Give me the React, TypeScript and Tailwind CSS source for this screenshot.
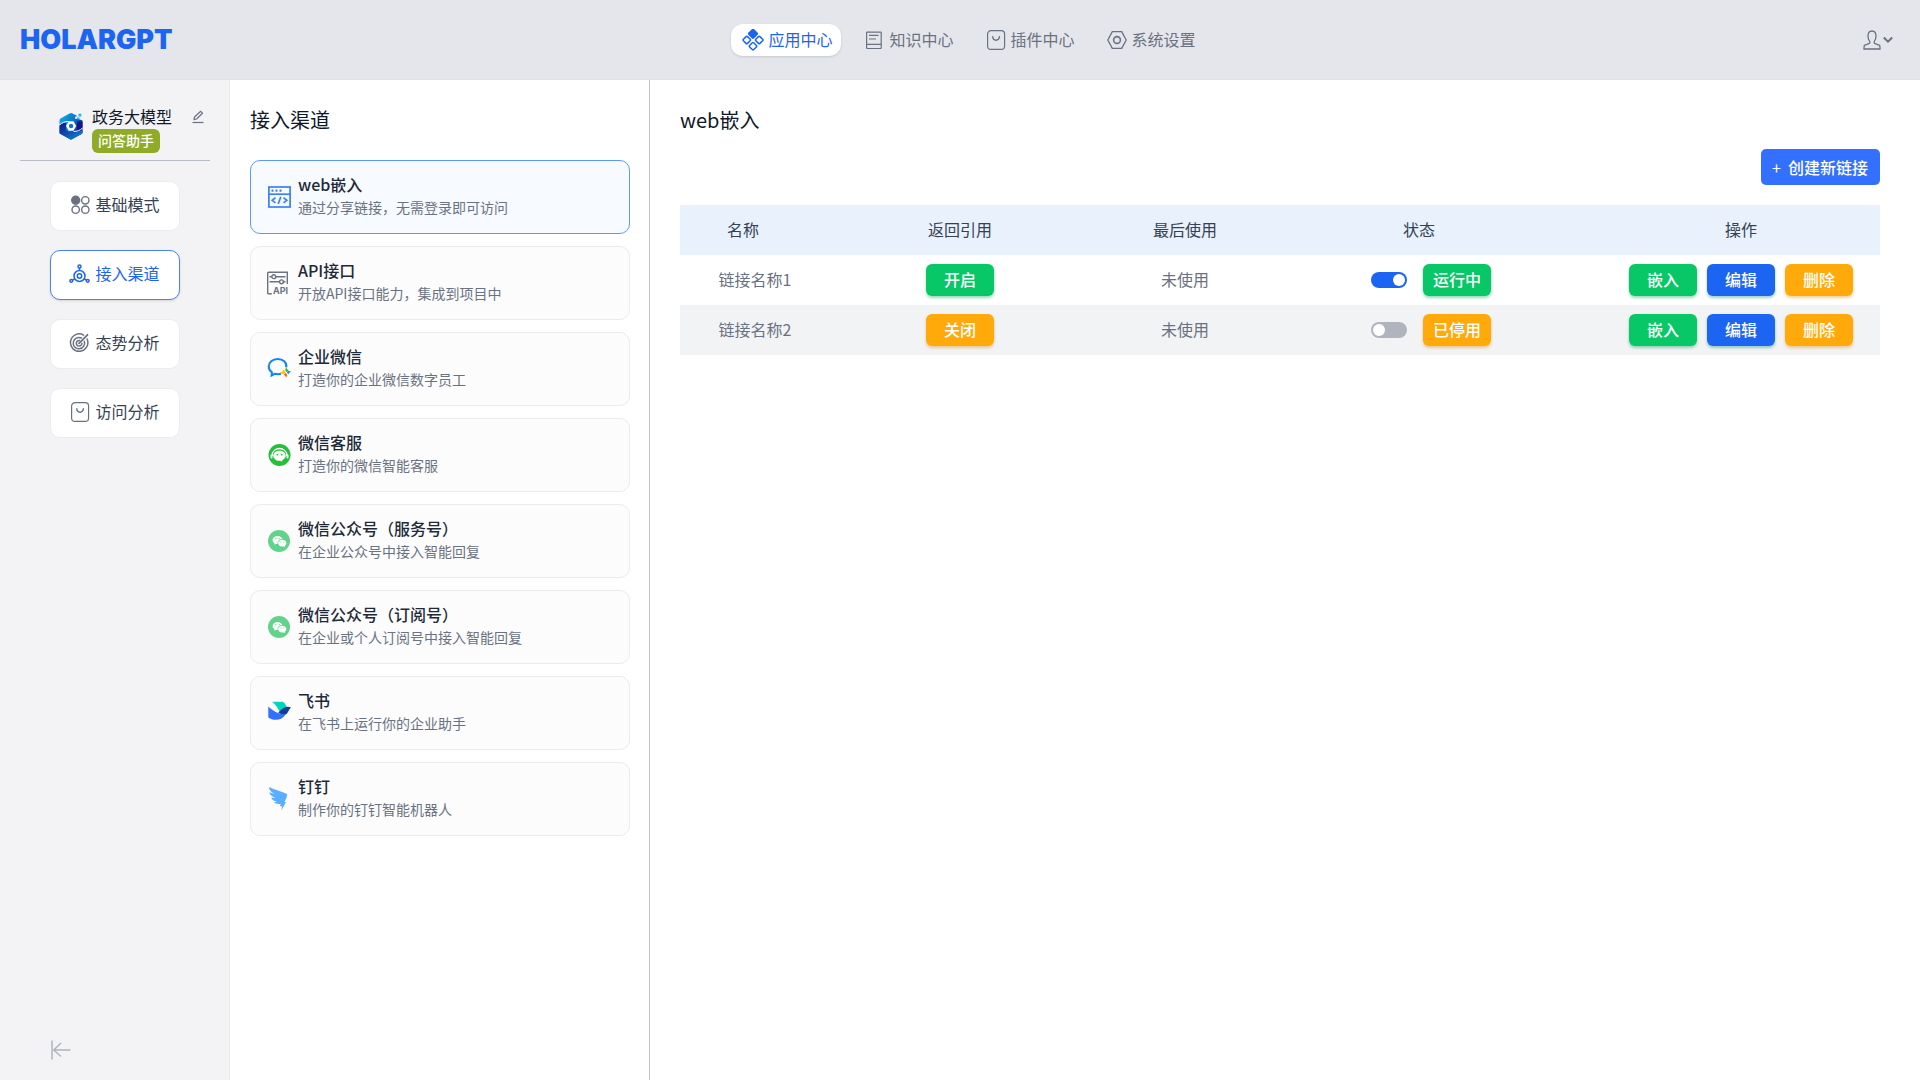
import { useState } from "react";
import type { ReactNode } from "react";
import { RiWechatFill } from "react-icons/ri";

type LinkItem = {
	id: number;
	name: string;
	quote: boolean;
	lastUsed: string;
	running: boolean;
};

const AppsIcon = () => (
	<svg width="22" height="22" viewBox="0 0 22 22" fill="none" stroke="currentColor" strokeWidth="1.5">
		<rect x="7.700" y="1.500" width="6.600" height="6.600" rx="1" transform="rotate(45 11 4.8)" fill="currentColor" />
		<rect x="1.900" y="8.100" width="5.800" height="5.800" rx="1" transform="rotate(45 4.8 11)" />
		<rect x="14.300" y="8.100" width="5.800" height="5.800" rx="1" transform="rotate(45 17.2 11)" />
		<rect x="8.100" y="14.300" width="5.800" height="5.800" rx="1" transform="rotate(45 11 17.2)" />
	</svg>
);

const BookIcon = () => (
	<svg width="22" height="22" viewBox="0 0 22 22" fill="none" stroke="currentColor" strokeWidth="1.2">
		<rect x="3.6" y="3.1" width="14.6" height="16.4" rx="0.5" />
		<path d="M3.6 15.4h14.6M6 6.3h9.5M6 10h7" />
	</svg>
);

const PluginIcon = () => (
	<svg width="22" height="22" viewBox="0 0 22 22" fill="none" stroke="currentColor" strokeWidth="1.2" strokeLinecap="round">
		<rect x="2.6" y="1.6" width="17" height="18.8" rx="3.5" />
		<path d="M7.8 7.6c0 4.8 6.6 4.8 6.6 0" strokeWidth="1.4" />
	</svg>
);

const SettingIcon = () => (
	<svg width="22" height="22" viewBox="0 0 22 22" fill="none" stroke="currentColor" strokeWidth="1.3" strokeLinejoin="round">
		<path d="M6.3 2.6h9.4L20.2 11l-4.5 8.4H6.3L1.8 11z" />
		<circle cx="11" cy="11" r="3.4" strokeWidth="1.6" />
	</svg>
);

const UserIcon = () => (
	<svg width="18" height="20" viewBox="0 0 18 20" fill="none" stroke="currentColor" strokeWidth="1.3" strokeLinejoin="round">
		<path d="M9 1C6 1 5 3 5 6c0 2.400.8 4.300 1.800 5.600.4 1.400-.3 1.900-1.400 2.300L1.300 15.300.9 19h16.200l-.4-3.700-4.100-1.400c-1.100-.4-1.800-.9-1.400-2.300C12.200 10.300 13 8.400 13 6c0-3-1-5-4-5z" />
	</svg>
);

const ChevronIcon = () => (
	<svg width="10" height="8" viewBox="0 0 10 8" fill="none" stroke="currentColor" strokeWidth="2">
		<path d="M.8 1.500 5 5.700l4.200-4.200" />
	</svg>
);

const BrandIcon = () => (
	<svg width="24" height="28" viewBox="0 0 24 28">
		<defs>
			<linearGradient id="brandTop" x1="0" y1="0" x2="1" y2="0.6">
				<stop offset="0" stopColor="#10b4ee" />
				<stop offset="0.6" stopColor="#0a72c4" />
				<stop offset="1" stopColor="#14148c" />
			</linearGradient>
			<linearGradient id="brandBottom" x1="0" y1="0" x2="1" y2="1">
				<stop offset="0" stopColor="#16128a" />
				<stop offset="0.5" stopColor="#0f4fb0" />
				<stop offset="1" stopColor="#0b93d8" />
			</linearGradient>
		</defs>
		<path d="M11 1.200 1.500 6.600Q.5 7.300.5 8.500v12q0 1 1 1.600l9.500 5.200q1 .5 2 0l9.500-5.200q1-.6 1-1.600v-12l-4-1.500-2-3.500L13 1.200q-1-.5-2 0z" fill="url(#brandTop)" />
		<path d="M.5 13.500C2.500 11.500 4.500 10.800 7 10.500v7.500c4 3.500 9 3.500 16.500 0v2.500q0 1-1 1.600L13 27.300q-1 .5-2 0L1.500 22.100q-1-.6-1-1.600z" fill="url(#brandBottom)" />
		<path d="M18 9.500h5.500v6.500c-1.500 1.500-3.500 2.500-5.500 3z" fill="#14148c" />
		<path d="M.5 13C3 10.500 6 9.500 9.500 9.500M23.500 16c-2.500 2.500-5.500 3.500-9 3.500" fill="none" stroke="#fff" strokeWidth="1" />
		<path d="M9.700 9.300h4.800l2.700 4.700-2.700 4.700H9.700L7 14z" fill="#fff" />
		<circle cx="12.100" cy="14" r="2.200" fill="#1173cc" />
		<path d="M16.200 4.500h2.300v2.300h-2.300z" fill="#fff" />
		<path d="M19.500 1.800h2.800v2.800h-2.800zM18.500 5.500h2v2h-2z" fill="#12b9ee" />
	</svg>
);

const EditIcon = () => (
	<svg width="12" height="14" viewBox="0 0 12 14" fill="none" stroke="currentColor" strokeWidth="1.2">
		<path d="M2 9.700 2.500 7 8.700 1.300l1.800 1.900L4.500 9z" strokeLinejoin="round" />
		<path d="M.5 12.500h11" />
	</svg>
);

const ModeIcon = () => (
	<svg width="22" height="22" viewBox="0 0 22 22" fill="none" stroke="currentColor" strokeWidth="1.4">
		<circle cx="6.700" cy="6.300" r="4" fill="currentColor" />
		<circle cx="16.300" cy="6.300" r="3.700" />
		<circle cx="6.700" cy="15.700" r="3.700" />
		<circle cx="16.300" cy="15.700" r="3.700" />
	</svg>
);

const ChannelIcon = () => (
	<svg width="22" height="22" viewBox="0 0 22 22" fill="none" stroke="currentColor" strokeWidth="1.5">
		<circle cx="10.500" cy="13" r="5.500" />
		<circle cx="10.500" cy="13" r="2.200" />
		<circle cx="10.500" cy="3.500" r="1.500" />
		<circle cx="2.300" cy="17.800" r="1.400" />
		<circle cx="18.700" cy="17.800" r="1.400" />
		<path d="M10.500 5v2.500M3.600 17l2.200-1.200M17.400 17l-2.200-1.200" />
	</svg>
);

const TargetIcon = () => (
	<svg width="22" height="22" viewBox="0 0 22 22" fill="none" stroke="currentColor" strokeWidth="1.500" strokeLinecap="round">
		<path d="M14.600 3.100a8.700 8.700 0 1 0 3.500 3.900" />
		<path d="M12.400 6a5.700 5.700 0 1 0 2.900 3.200" />
		<path d="M10.500 8.500a2.800 2.800 0 1 0 2.400 2.700" />
		<path d="m10 11.300 8.500-8.500" strokeWidth="1.800" />
	</svg>
);

const CollapseIcon = () => (
	<svg width="20" height="20" viewBox="0 0 20 20" fill="none" stroke="currentColor" strokeWidth="1.500">
		<path d="M1 .500v19M2.500 10H19.500M10 3 2.700 10l7.300 6.500" />
	</svg>
);

const WebIcon = () => (
	<svg width="24" height="24" viewBox="0 0 24 24" fill="none" stroke="#3b7ff5" strokeWidth="1.700">
		<rect x="1.900" y="2" width="21.200" height="20" />
		<path d="M1.900 9.200h21.200" />
		<path d="M8.500 12.700 5.200 15.300l3.300 2.600M16.500 12.700l3.300 2.600-3.300 2.600M13.800 11.700l-2.600 7.300" />
		<path d="M4.500 5.700h2M8.500 5.700h2M12.500 5.700h2" strokeWidth="2.200" />
	</svg>
);

const ApiIcon = () => (
	<svg width="24" height="24" viewBox="0 0 24 24" fill="none" stroke="#6b7280" strokeWidth="1.400">
		<path d="M4.800 22.800H1.700Q.7 22.800.7 21.800V2.200Q.7 1.200 1.700 1.200H20.300V13" />
		<path d="M2.500 5.700h2.300M8.800 5.700h9.700M2.500 10.800h10M16.500 10.800h2" />
		<circle cx="6.800" cy="5.700" r="1.900" />
		<circle cx="14.500" cy="10.800" r="1.900" />
		<text x="6" y="23" fill="#6b7280" stroke="none" fontSize="9" fontWeight="700" fontFamily="Inter, sans-serif">API</text>
	</svg>
);

const WecomIcon = () => (
	<svg width="24" height="24" viewBox="0 0 24 24" fill="none">
		<path d="M19.300 10.300C20 5.500 16 1.900 10.700 1.900c-5.300 0-9 3.500-9 7.600 0 2.500 1.300 4.500 3.200 5.800l-.3 3.200 3.200-1.700c2 .5 4.300.5 6.200 0" stroke="#0f86f6" strokeWidth="2" />
		<path d="M19.300 10.200c.3 1.600 1.200 2.500 2.500 3l-2.200 1.800c-1.500-1.200-1.700-2.900-.3-4.800z" fill="#2fb42f" />
		<path d="M24.500 15c-1.800 0-2.600.9-3.100 2.400L19.800 15c1.100-1.300 2.900-1.500 4.700 0z" fill="#0f86f6" />
		<path d="M19 20.800c-.1-1.800-1-2.700-2.400-3.100l2.200-1.600c1.600 1.200 1.700 3 .2 4.700z" fill="#fb6400" />
		<path d="M13.700 15.500c1.700-.1 2.500-1.100 3-2.300l1.500 2.200c-1.100 1.500-2.800 1.600-4.500.1z" fill="#fbc400" stroke="#fbc400" />
	</svg>
);

const ServiceIcon = () => (
	<svg width="24" height="24" viewBox="0 0 24 24" fill="none">
		<circle cx="12.500" cy="12" r="11" fill="#25bf3b" />
		<path d="M5 13c0-10 15-10 15 0" stroke="#fff" strokeWidth="1.300" />
		<path d="M12.500 7.700c-3.700 0-6.200 2.200-6.200 5 0 2.900 2.600 5 6.200 5l3 .8-.3-1.500c2.200-.8 3.500-2.400 3.500-4.300 0-2.800-2.500-5-6.200-5z" fill="#fff" />
		<rect x="3.500" y="11.500" width="2" height="4" rx="1" fill="#fff" />
		<rect x="19.500" y="11.500" width="2" height="4" rx="1" fill="#fff" />
		<circle cx="10.300" cy="11.600" r="0.900" fill="#25bf3b" />
		<circle cx="14.700" cy="11.600" r="0.900" fill="#25bf3b" />
	</svg>
);

const WechatIcon = () => (
	<span className="flex size-[22px] items-center justify-center rounded-full bg-[#62d38a] text-white">
		<RiWechatFill size={15} />
	</span>
);

const FeishuIcon = () => (
	<svg width="24" height="24" viewBox="1 0 24 24">
		<path d="M6.300.8H16.800C19 2.500 20.300 4.600 21 6.300c-2.500.7-4.700 2.500-7 5C12 7 9.500 3.500 6.300.8z" fill="#00d6b9" />
		<path d="M2.300 5.500C6.500 9.500 11 12.500 19.500 13.700 15 20.500 7 19.500 2.300 16.500z" fill="#3370ff" />
		<path d="M25 6.200c-5-1.700-8.500.8-12.700 5.400C16 13.800 19 14.500 20.500 13c1.500-1.500 2.500-4.500 4.500-6.800z" fill="#133c9a" />
	</svg>
);

const DingIcon = () => (
	<svg width="24" height="24" viewBox="0 0 24 24">
		<path d="M2 0c5 2.700 11 4 17 6.500q1.500.8 1 2.500c-.5 2-1.500 4-2.600 6h1.600L14.300 23.500 15 19.200h-2.200l1-2.500c-2.500.6-5 .4-6.800-1.400l3.500-.6C7.500 14.400 5 13 4.200 10.500l4.500.3C5 9.700 2.500 7.500 2.200 5.300l6 2C4 5.300 2 3 2 0z" fill="#5aaeff" />
	</svg>
);

const navList = [
	{ label: "应用中心", icon: <AppsIcon /> },
	{ label: "知识中心", icon: <BookIcon /> },
	{ label: "插件中心", icon: <PluginIcon /> },
	{ label: "系统设置", icon: <SettingIcon /> },
];

const menuList = [
	{ label: "基础模式", icon: <ModeIcon /> },
	{ label: "接入渠道", icon: <ChannelIcon /> },
	{ label: "态势分析", icon: <TargetIcon /> },
	{ label: "访问分析", icon: <PluginIcon /> },
];

const channelList = [
	{ title: "web嵌入", desc: "通过分享链接，无需登录即可访问", icon: <WebIcon /> },
	{ title: "API接口", desc: "开放API接口能力，集成到项目中", icon: <ApiIcon /> },
	{ title: "企业微信", desc: "打造你的企业微信数字员工", icon: <WecomIcon /> },
	{ title: "微信客服", desc: "打造你的微信智能客服", icon: <ServiceIcon /> },
	{ title: "微信公众号（服务号）", desc: "在企业公众号中接入智能回复", icon: <WechatIcon /> },
	{ title: "微信公众号（订阅号）", desc: "在企业或个人订阅号中接入智能回复", icon: <WechatIcon /> },
	{ title: "飞书", desc: "在飞书上运行你的企业助手", icon: <FeishuIcon /> },
	{ title: "钉钉", desc: "制作你的钉钉智能机器人", icon: <DingIcon /> },
];

const TABLE_HEAD = [
	{ label: "名称", width: "w-[126px]" },
	{ label: "返回引用", width: "w-[308px]" },
	{ label: "最后使用", width: "w-[142px]" },
	{ label: "状态", width: "w-[346px] pr-5" },
	{ label: "操作", width: "w-[278px]" },
];

const buttonColors = {
	green: "bg-[#07c767] shadow-[0_2px_3px_rgba(7,160,90,0.4)]",
	orange: "bg-[#ffaa0a] shadow-[0_2px_3px_rgba(220,140,10,0.4)]",
	blue: "bg-[#1c64f2] shadow-[0_2px_3px_rgba(7,140,110,0.4)]",
};

const ActionButton = ({
	color,
	onClick,
	children,
}: {
	color: keyof typeof buttonColors;
	onClick?: () => void;
	children: ReactNode;
}) => (
	<button
		type="button"
		onClick={onClick}
		className={`h-8 w-[68px] cursor-pointer rounded-md pb-0.5 text-base font-medium text-white ${buttonColors[color]}`}
	>
		{children}
	</button>
);

const App = () => {
	const [activeNav, setActiveNav] = useState("应用中心");
	const [activeMenu, setActiveMenu] = useState("接入渠道");
	const [activeChannel, setActiveChannel] = useState("web嵌入");
	const [links, setLinks] = useState<LinkItem[]>([
		{ id: 1, name: "链接名称1", quote: true, lastUsed: "未使用", running: true },
		{ id: 2, name: "链接名称2", quote: false, lastUsed: "未使用", running: false },
	]);

	const toggleField = (id: number, field: "quote" | "running") => {
		setLinks(links.map((item) => (item.id === id ? { ...item, [field]: !item[field] } : item)));
	};

	const handleDelete = (id: number) => {
		setLinks(links.filter((item) => item.id !== id));
	};

	const handleCreate = () => {
		const id = links.reduce((max, item) => Math.max(max, item.id), 0) + 1;
		setLinks([...links, { id, name: `链接名称${id}`, quote: false, lastUsed: "未使用", running: false }]);
	};

	return (
		<div className="flex min-h-screen flex-col bg-white font-['Noto_Sans_CJK_SC',sans-serif] text-base text-gray-800">
			{/* Header */}
			<header className="flex h-20 items-center border-b border-[#dfe1e5] bg-[#e5e6eb] px-5">
				<div className="flex-1">
					<a href="#" className="font-['Inter',sans-serif] text-[27px] leading-8 font-black text-[#1c64f2]">
						HOLARGPT
					</a>
				</div>
				<nav className="flex gap-[11px] pl-4">
					{navList.map((item) => (
						<button
							key={item.label}
							type="button"
							onClick={() => setActiveNav(item.label)}
							className={`flex h-8 cursor-pointer items-center gap-1 rounded-xl pr-[9px] pl-[11px] ${
								activeNav === item.label
									? "bg-white text-[#1c64f2] shadow-sm"
									: "text-gray-500"
							}`}
						>
							{item.icon}
							<span className="pb-0.5">{item.label}</span>
						</button>
					))}
				</nav>
				<div className="flex flex-1 justify-end">
					<button type="button" aria-label="用户菜单" className="mr-[7px] flex cursor-pointer items-center gap-0.5 text-gray-500">
						<UserIcon />
						<ChevronIcon />
					</button>
				</div>
			</header>

			<div className="flex flex-1">
				{/* Sidebar */}
				<aside className="flex w-[230px] shrink-0 flex-col border-r border-[#e8e9eb] bg-[#f3f3f6]">
					<div className="mr-[19px] ml-5 flex h-[81px] gap-2 border-b border-[#b9bdc7] pt-6 pr-[6px] pl-[39px]">
						<div className="pt-2">
							<BrandIcon />
						</div>
						<div className="flex flex-1 flex-col items-start gap-px pl-px">
							<div className="flex w-full items-center justify-between leading-6 text-gray-900">
								政务大模型
								<button type="button" aria-label="编辑名称" className="cursor-pointer pt-0.5 text-gray-500">
									<EditIcon />
								</button>
							</div>
							<span className="h-6 rounded-md bg-[#8fab27] px-[6px] text-sm leading-[22px] font-medium text-white">
								问答助手
							</span>
						</div>
					</div>

					<div className="flex flex-col items-center gap-[19px] pt-5">
						{menuList.map((item) => (
							<button
								key={item.label}
								type="button"
								onClick={() => setActiveMenu(item.label)}
								className={`flex h-[50px] w-[130px] cursor-pointer items-center justify-center gap-1 rounded-[10px] border bg-white pb-0.5 ${
									activeMenu === item.label
										? "border-[#4a82f7] text-[#1c64f2] shadow-sm"
										: "border-[#ececef] text-gray-500"
								}`}
							>
								{item.icon}
								<span className={activeMenu === item.label ? "pb-0.5" : "pb-0.5 text-gray-700"}>{item.label}</span>
							</button>
						))}
					</div>

					<div className="mt-auto px-[51px] pb-5">
						<button type="button" aria-label="收起侧栏" className="block cursor-pointer text-[#b0b4bd]">
							<CollapseIcon />
						</button>
					</div>
				</aside>

				{/* Channels */}
				<section className="w-[420px] shrink-0 border-r border-[#c2c4c7] px-5 pt-6 pr-[19px]">
					<h2 className="text-xl leading-8 text-gray-900">接入渠道</h2>
					<div className="mt-6 flex flex-col gap-3">
						{channelList.map((item) => (
							<button
								key={item.title}
								type="button"
								onClick={() => setActiveChannel(item.title)}
								className={`flex h-[74px] cursor-pointer items-center gap-[7px] rounded-[10px] border pl-4 text-left ${
									activeChannel === item.title
										? "border-[#5b9bf8] bg-[#f7faff]"
										: "border-[#ebebeb] bg-[#fcfcfc]"
								}`}
							>
								<span className="flex w-6 shrink-0 justify-center">{item.icon}</span>
								<span className="flex flex-col pb-1">
									<span className="leading-6 font-medium">{item.title}</span>
									<span className="text-sm leading-[22px] text-gray-500">{item.desc}</span>
								</span>
							</button>
						))}
					</div>
				</section>

				{/* Links */}
				<main className="min-w-0 flex-1 px-10 pt-6 pl-[30px]">
					<h1 className="text-xl leading-8 text-gray-900">{activeChannel}</h1>
					<div className="mt-[13px] flex justify-end">
						<button
							type="button"
							onClick={handleCreate}
							className="flex h-9 cursor-pointer items-center gap-[7px] rounded-[5px] bg-[#3370ff] pr-3 pb-px pl-[11px] font-medium text-white"
						>
							<span className="font-normal">+</span>
							创建新链接
						</button>
					</div>

					<table className="mt-5 w-full table-fixed text-center">
						<thead className="bg-[#e8f1fc] text-gray-700">
							<tr className="h-[50px]">
								{TABLE_HEAD.map((head) => (
									<th key={head.label} className={`pb-0.5 font-normal ${head.width}`}>
										{head.label}
									</th>
								))}
							</tr>
						</thead>
						<tbody className="text-gray-500">
							{links.map((item) => (
								<tr key={item.id} className="h-[50px] even:bg-[#f2f3f5]">
									<td className="pb-0.5 pl-6">{item.name}</td>
									<td>
										<ActionButton
											color={item.quote ? "green" : "orange"}
											onClick={() => toggleField(item.id, "quote")}
										>
											{item.quote ? "开启" : "关闭"}
										</ActionButton>
									</td>
									<td className="pb-0.5">{item.lastUsed}</td>
									<td>
										<div className="flex items-center justify-center gap-4 pl-1">
											<input
												type="checkbox"
												aria-label={`${item.name}状态`}
												checked={item.running}
												onChange={() => toggleField(item.id, "running")}
												className="flex h-4 w-9 cursor-pointer appearance-none items-center rounded-full bg-[#b0b4bd] px-0.5 before:size-3 before:rounded-full before:bg-white before:content-[''] checked:bg-[#1c64f2] checked:before:ml-5"
											/>
											<ActionButton
												color={item.running ? "green" : "orange"}
												onClick={() => toggleField(item.id, "running")}
											>
												{item.running ? "运行中" : "已停用"}
											</ActionButton>
										</div>
									</td>
									<td>
										<div className="flex items-center justify-center gap-[10px]">
											<ActionButton color="green">嵌入</ActionButton>
											<ActionButton color="blue">编辑</ActionButton>
											<ActionButton color="orange" onClick={() => handleDelete(item.id)}>
												删除
											</ActionButton>
										</div>
									</td>
								</tr>
							))}
						</tbody>
					</table>
				</main>
			</div>
		</div>
	);
};

export default App;
